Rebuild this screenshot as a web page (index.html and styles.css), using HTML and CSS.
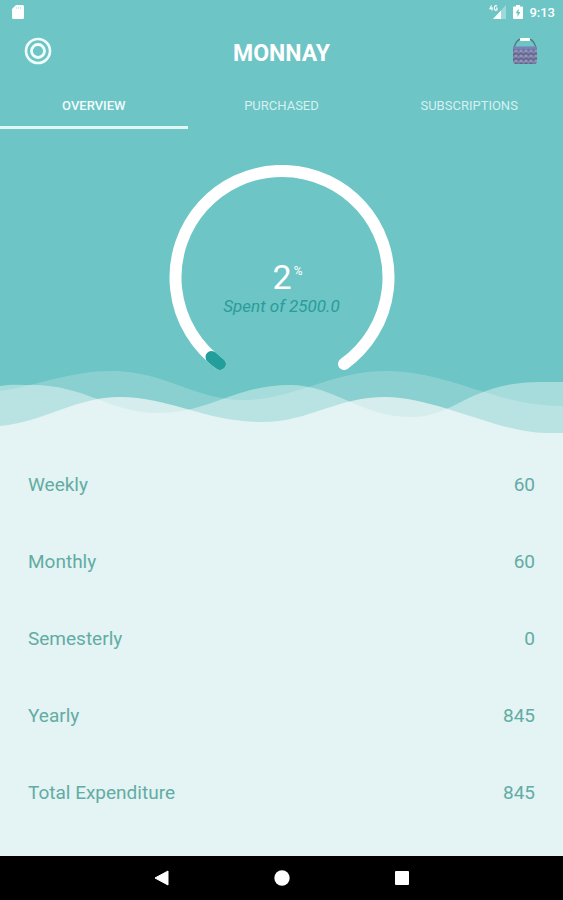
FILE: index.html
```
<!DOCTYPE html>
<html lang="en">
<head>
    <meta charset="UTF-8">
    <meta name="viewport" content="width=device-width, initial-scale=1.0">
    <title>Monnay</title>
    <link rel="stylesheet" href="styles.css">
</head>
<body>
    <div class="status-bar">
        <svg class="status-sd" width="12" height="14" viewBox="0 0 12 14">
            <path d="M4 0h6.500a1.500 1.500 0 0 1 1.500 1.500v11a1.500 1.500 0 0 1-1.500 1.500h-9a1.500 1.500 0 0 1-1.500-1.500V4z" fill="#fff"/>
            <path d="M4.500 2v2M6.500 2v2M8.500 2v2" stroke="#c9ebeb"/>
        </svg>
        <div class="status-right">
            <svg width="18" height="14" viewBox="0 0 18 14">
                <path d="M2.500 0.500L0.800 3.800h3M3 2v3.500M8 1.200C7 0 5.300.6 5.300 3s1.700 2.800 2.700 1.800V3H6.800" fill="none" stroke="#fff" stroke-width="1.100"/>
                <path d="M17 0v14H4z" fill="#fff" opacity="0.350"/>
                <path d="M12 5.400V14H4z" fill="#fff"/>
            </svg>
            <svg width="10" height="14" viewBox="0 0 10 14">
                <path d="M3 0h4v1.500h2a1 1 0 0 1 1 1V13a1 1 0 0 1-1 1H1a1 1 0 0 1-1-1V2.500a1 1 0 0 1 1-1h2z" fill="#fff"/>
                <path d="M5.600 3.500L2.700 8.300h1.800v3.700L7.400 7H5.600z" fill="#6dc5c6"/>
            </svg>
            <span>9:13</span>
        </div>
    </div>

    <header class="app-bar">
        <button class="icon-button" aria-label="Budget target">
            <svg width="28" height="28" viewBox="0 0 28 28" fill="none" stroke="#f2fdfd">
                <circle cx="14" cy="14" r="12" stroke-width="2.600"/>
                <circle cx="14" cy="14" r="6.500" stroke-width="2.800"/>
            </svg>
        </button>
        <h1>MONNAY</h1>
        <button class="icon-button" aria-label="Basket">
            <svg width="28" height="28" viewBox="0 0 28 28">
                <defs>
                    <pattern id="weave" width="5" height="5" patternUnits="userSpaceOnUse">
                        <rect width="5" height="5" fill="#7f82a8"/>
                        <path d="M0 1l2.500 2L5 1" fill="none" stroke="#5e6288" stroke-width="1.200"/>
                        <path d="M0 4h1.200M3.800 4H5" stroke="#a5a9c4"/>
                    </pattern>
                </defs>
                <path d="M3 11C4 7 6 3.500 9 2.200M25 11C24 7 22 3.500 19 2.200" fill="none" stroke="#52777f" stroke-width="1.300"/>
                <rect x="9" y="1" width="10" height="3" rx="1" fill="#fff"/>
                <path d="M2 11h24v13a3 3 0 0 1-3 3H5a3 3 0 0 1-3-3z" fill="url(#weave)"/>
                <rect x="2" y="9.500" width="24" height="3" rx="1" fill="#7a80b8"/>
            </svg>
        </button>
    </header>

    <nav class="tabs">
        <a href="#overview" class="tab active">OVERVIEW</a>
        <a href="#purchased" class="tab">PURCHASED</a>
        <a href="#subscriptions" class="tab">SUBSCRIPTIONS</a>
    </nav>

    <main id="overview">
        <section class="gauge">
            <svg class="gauge-arc" width="226" height="206" viewBox="0 0 226 206" fill="none" stroke-width="12" stroke-linecap="round">
                <path d="M51 199A106.500 106.500 0 1 1 175 199" stroke="#fff"/>
                <path d="M51 199A106.500 106.500 0 0 1 42.500 192" stroke="#229f9b"/>
            </svg>
            <div class="gauge-text">
                <p class="gauge-value">2<sup>%</sup></p>
                <p class="gauge-label">Spent of 2500.0</p>
            </div>
        </section>

        <svg class="waves" viewBox="0 0 563 70" preserveAspectRatio="none">
            <path d="M0 23C40 17 70 3 112 3C165 3 195 32 243 32C295 32 330 3 386 3C450 3 495 38 563 38V70H0z" fill="#fff" fill-opacity="0.200"/>
            <path d="M0 18C12 16 20 17 32 17C86 17 110 45 158 45C210 45 235 17 290 17C335 17 360 49 412 49C455 49 470 14 540 14L563 14V70H0z" fill="#fff" fill-opacity="0.400"/>
            <path d="M0 58C45 54 75 29 120 29C170 29 205 54 262 54C310 54 335 29 386 29C435 29 500 65 545 65L563 65V70H0z" fill="#f6f9fa" fill-opacity="0.700"/>
        </svg>

        <dl class="totals">
            <div class="total-row">
                <dt>Weekly</dt>
                <dd>60</dd>
            </div>
            <div class="total-row">
                <dt>Monthly</dt>
                <dd>60</dd>
            </div>
            <div class="total-row">
                <dt>Semesterly</dt>
                <dd>0</dd>
            </div>
            <div class="total-row">
                <dt>Yearly</dt>
                <dd>845</dd>
            </div>
            <div class="total-row">
                <dt>Total Expenditure</dt>
                <dd>845</dd>
            </div>
        </dl>
    </main>

    <footer class="nav-bar">
        <button aria-label="Back">
            <svg width="16" height="16" viewBox="0 0 16 16"><path d="M14 1v14L1 8z" fill="#fff" stroke="#fff" stroke-linejoin="round"/></svg>
        </button>
        <button aria-label="Home">
            <svg width="16" height="16" viewBox="0 0 16 16"><circle cx="8" cy="8" r="7.700" fill="#fff"/></svg>
        </button>
        <button aria-label="Recent apps">
            <svg width="16" height="16" viewBox="0 0 16 16"><rect x="1" y="1" width="14" height="14" rx="1" fill="#fff"/></svg>
        </button>
    </footer>
</body>
</html>
```

FILE: styles.css
```
body {
    margin: 0;
    min-height: 100vh;
    display: flex;
    flex-direction: column;
    background-color: #6dc5c6;
    color: #fff;
    font-family: Roboto, sans-serif;
}

svg {
    display: block;
}

button {
    padding: 0;
    border: none;
    background: none;
    cursor: pointer;
}

.status-bar {
    display: flex;
    justify-content: space-between;
    align-items: center;
    height: 24px;
    padding: 0 8px 0 12px;
    font-size: 13px;
    font-weight: 500;
}

.status-right {
    display: flex;
    align-items: center;
    gap: 6px;
}

.app-bar {
    display: flex;
    justify-content: space-between;
    align-items: center;
    height: 54px;
    padding: 0 24px;
}

.app-bar h1 {
    margin: 0;
    padding-top: 6px;
    font-size: 23px;
    font-weight: 700;
    line-height: 28px;
}

.tabs {
    display: grid;
    grid-template-columns: repeat(3, 1fr);
    height: 51px;
}

.tab {
    display: flex;
    justify-content: center;
    align-items: center;
    border-top: 6px solid transparent;
    border-bottom: 3px solid transparent;
    color: #d5f1f0;
    font-size: 13px;
    font-weight: 400;
    text-decoration: none;
}

.tab.active {
    border-bottom-color: #e2f6f6;
    color: #f2fcfc;
    font-weight: 500;
}

main {
    flex: 1;
    display: flex;
    flex-direction: column;
}

.gauge {
    display: grid;
    justify-items: center;
    padding-top: 36px;
}

.gauge-arc,
.gauge-text {
    grid-area: 1 / 1;
}

.gauge-text {
    padding-top: 92px;
    text-align: center;
}

.gauge-text p {
    margin: 0;
}

.gauge-value {
    display: flex;
    justify-content: center;
    padding-left: 12px;
    font-size: 34px;
    line-height: 40px;
}

.gauge-value sup {
    padding-left: 2px;
    font-size: 12px;
    line-height: 28px;
}

.gauge-label {
    color: #2a9c99;
    font-size: 17px;
    font-style: italic;
    line-height: 18px;
}

/* the wave crests reach up under the gauge ends */
.waves {
    width: 100%;
    height: 70px;
    margin-top: -3px;
}

.totals {
    flex: 1;
    margin: 0;
    padding: 8px 28px 16px;
    background-color: #e4f3f3;
    color: #62aca4;
    font-size: 19px;
}

.total-row {
    display: flex;
    justify-content: space-between;
    align-items: center;
    height: 77px;
}

.total-row dd {
    margin: 0;
}

.nav-bar {
    display: flex;
    justify-content: center;
    align-items: center;
    gap: 104px;
    height: 44px;
    background-color: #000;
}
```
